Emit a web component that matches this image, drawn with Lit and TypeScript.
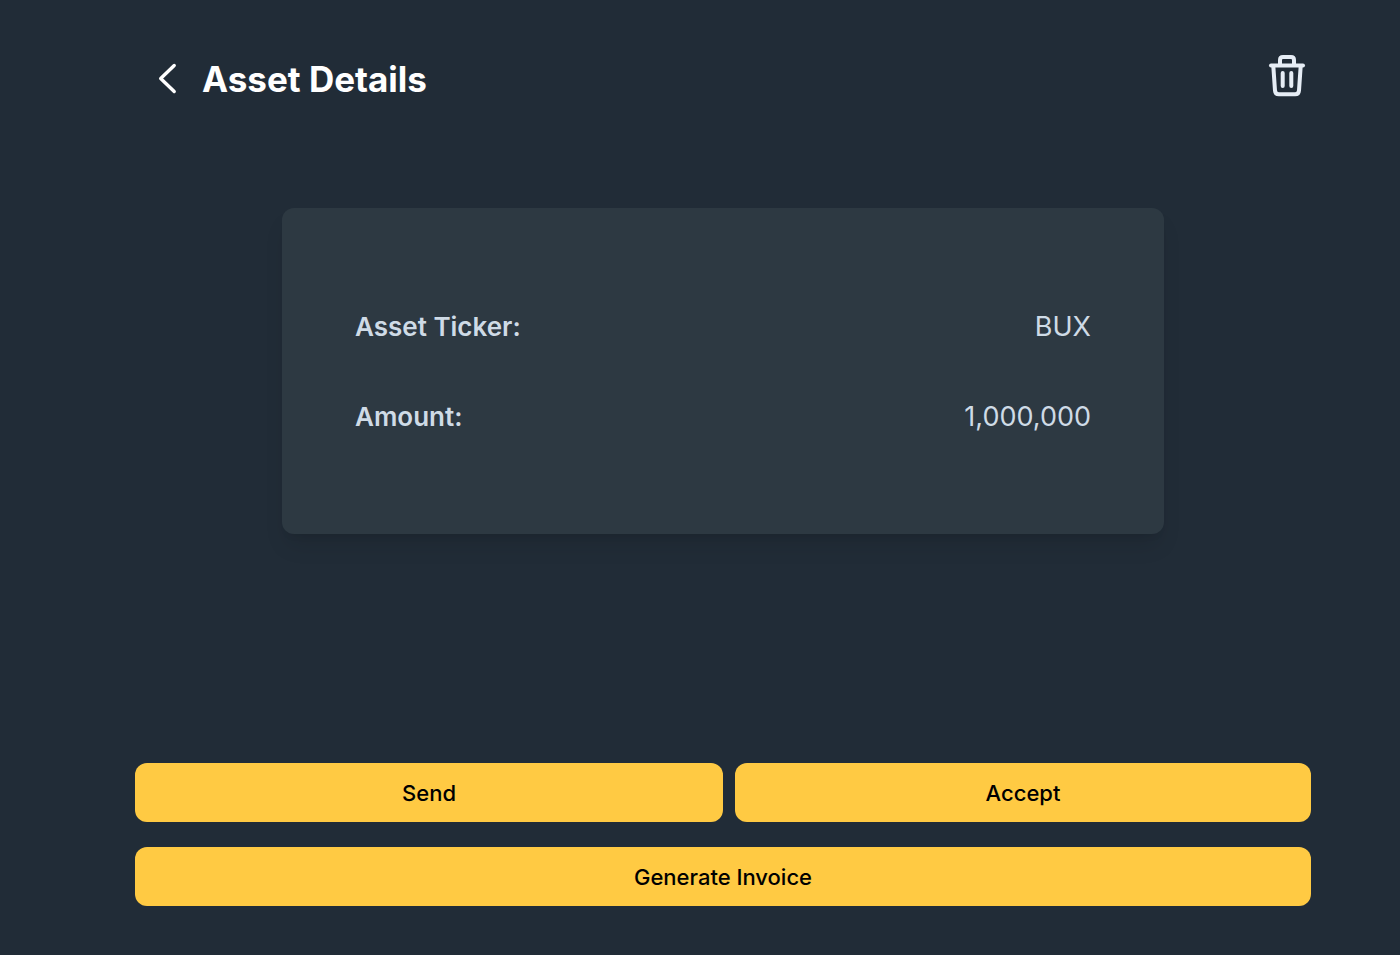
import { LitElement, css, html } from "lit";
import { customElement, property } from "lit/decorators.js";

interface AssetField {
  label: string;
  value: string;
}

@customElement("app-root")
export class AppRoot extends LitElement {
  @property({ attribute: false })
  fields: AssetField[] = [
    { label: "Asset Ticker:", value: "BUX" },
    { label: "Amount:", value: "1,000,000" },
  ];

  static styles = css`
    :host {
      display: block;
      background: #212c37;
      color: #cfdbe6;
      font-family: Inter, "Liberation Sans", sans-serif;
    }

    .page {
      box-sizing: border-box;
      min-height: 100vh;
      padding: 52px 89px 49px 135px;
      display: flex;
      flex-direction: column;
    }

    .header {
      display: flex;
      align-items: center;
      padding: 0 3px 0 15px;
      height: 52px;
    }

    .icon-button {
      display: flex;
      padding: 0;
      border: 0;
      background: none;
      cursor: pointer;
    }

    .icon {
      display: block;
      fill: none;
      stroke-linecap: round;
      stroke-linejoin: round;
    }

    .back {
      stroke: #ffffff;
      stroke-width: 3.4;
    }

    .trash {
      stroke: #e6edf5;
      stroke-width: 4;
    }

    .title {
      flex: 1;
      margin: 0;
      padding: 2px 0 0 16px;
      color: #ffffff;
      font-size: 35px;
      line-height: 44px;
      font-weight: 700;
    }

    .card {
      box-sizing: border-box;
      width: 75%;
      margin: 104px auto 48px;
      padding: 99px 73px 97px;
      display: flex;
      flex-direction: column;
      gap: 50px;
      border-radius: 12px;
      background: #2d3942;
      box-shadow: 0 15px 22px -4px rgba(0, 0, 0, 0.1),
        0 6px 9px -6px rgba(0, 0, 0, 0.1);
    }

    .row {
      display: flex;
      justify-content: space-between;
      font-size: 27px;
      line-height: 40px;
    }

    .label {
      font-size: 26px;
      font-weight: 600;
    }

    .value {
      margin: 0;
    }

    .actions {
      margin-top: auto;
      display: grid;
      grid-template-columns: 1fr 1fr;
      row-gap: 25px;
    }

    .action {
      padding: 16px 15px 14px;
      border: 0;
      border-radius: 12px;
      background: #ffca43;
      color: #000000;
      font-family: inherit;
      font-size: 22px;
      line-height: 29px;
      font-weight: 500;
      cursor: pointer;
    }

    .spaced {
      margin-left: 12px;
    }

    .wide {
      grid-column: 1 / -1;
    }
  `;

  render() {
    return html`
      <main class="page">
        <header class="header">
          <button class="icon-button" type="button" aria-label="Back">
            <svg class="icon back" width="36" height="52" viewBox="0 0 36 52">
              <path d="M24.200 13.500 10.700 26.500 24.200 39.500" />
            </svg>
          </button>
          <h1 class="title">Asset Details</h1>
          <button class="icon-button" type="button" aria-label="Delete asset">
            <svg class="icon trash" width="41" height="52" viewBox="0 0 41 52">
              <path d="M4 13.500H36" />
              <path d="M13 13V8q0-3 3-3h8q3 0 3 3v5" />
              <path d="M6.300 14 8 38.500q.3 3.700 3.800 3.700h16.400q3.500 0 3.800-3.700L33.700 14" />
              <path d="M15.700 21V34M24.300 21V34" />
            </svg>
          </button>
        </header>

        <dl class="card">
          ${this.fields.map(
            (field) => html`
              <div class="row">
                <dt class="label">${field.label}</dt>
                <dd class="value">${field.value}</dd>
              </div>
            `
          )}
        </dl>

        <div class="actions">
          <button class="action" type="button">Send</button>
          <button class="action spaced" type="button">Accept</button>
          <button class="action wide" type="button">Generate Invoice</button>
        </div>
      </main>
    `;
  }
}
